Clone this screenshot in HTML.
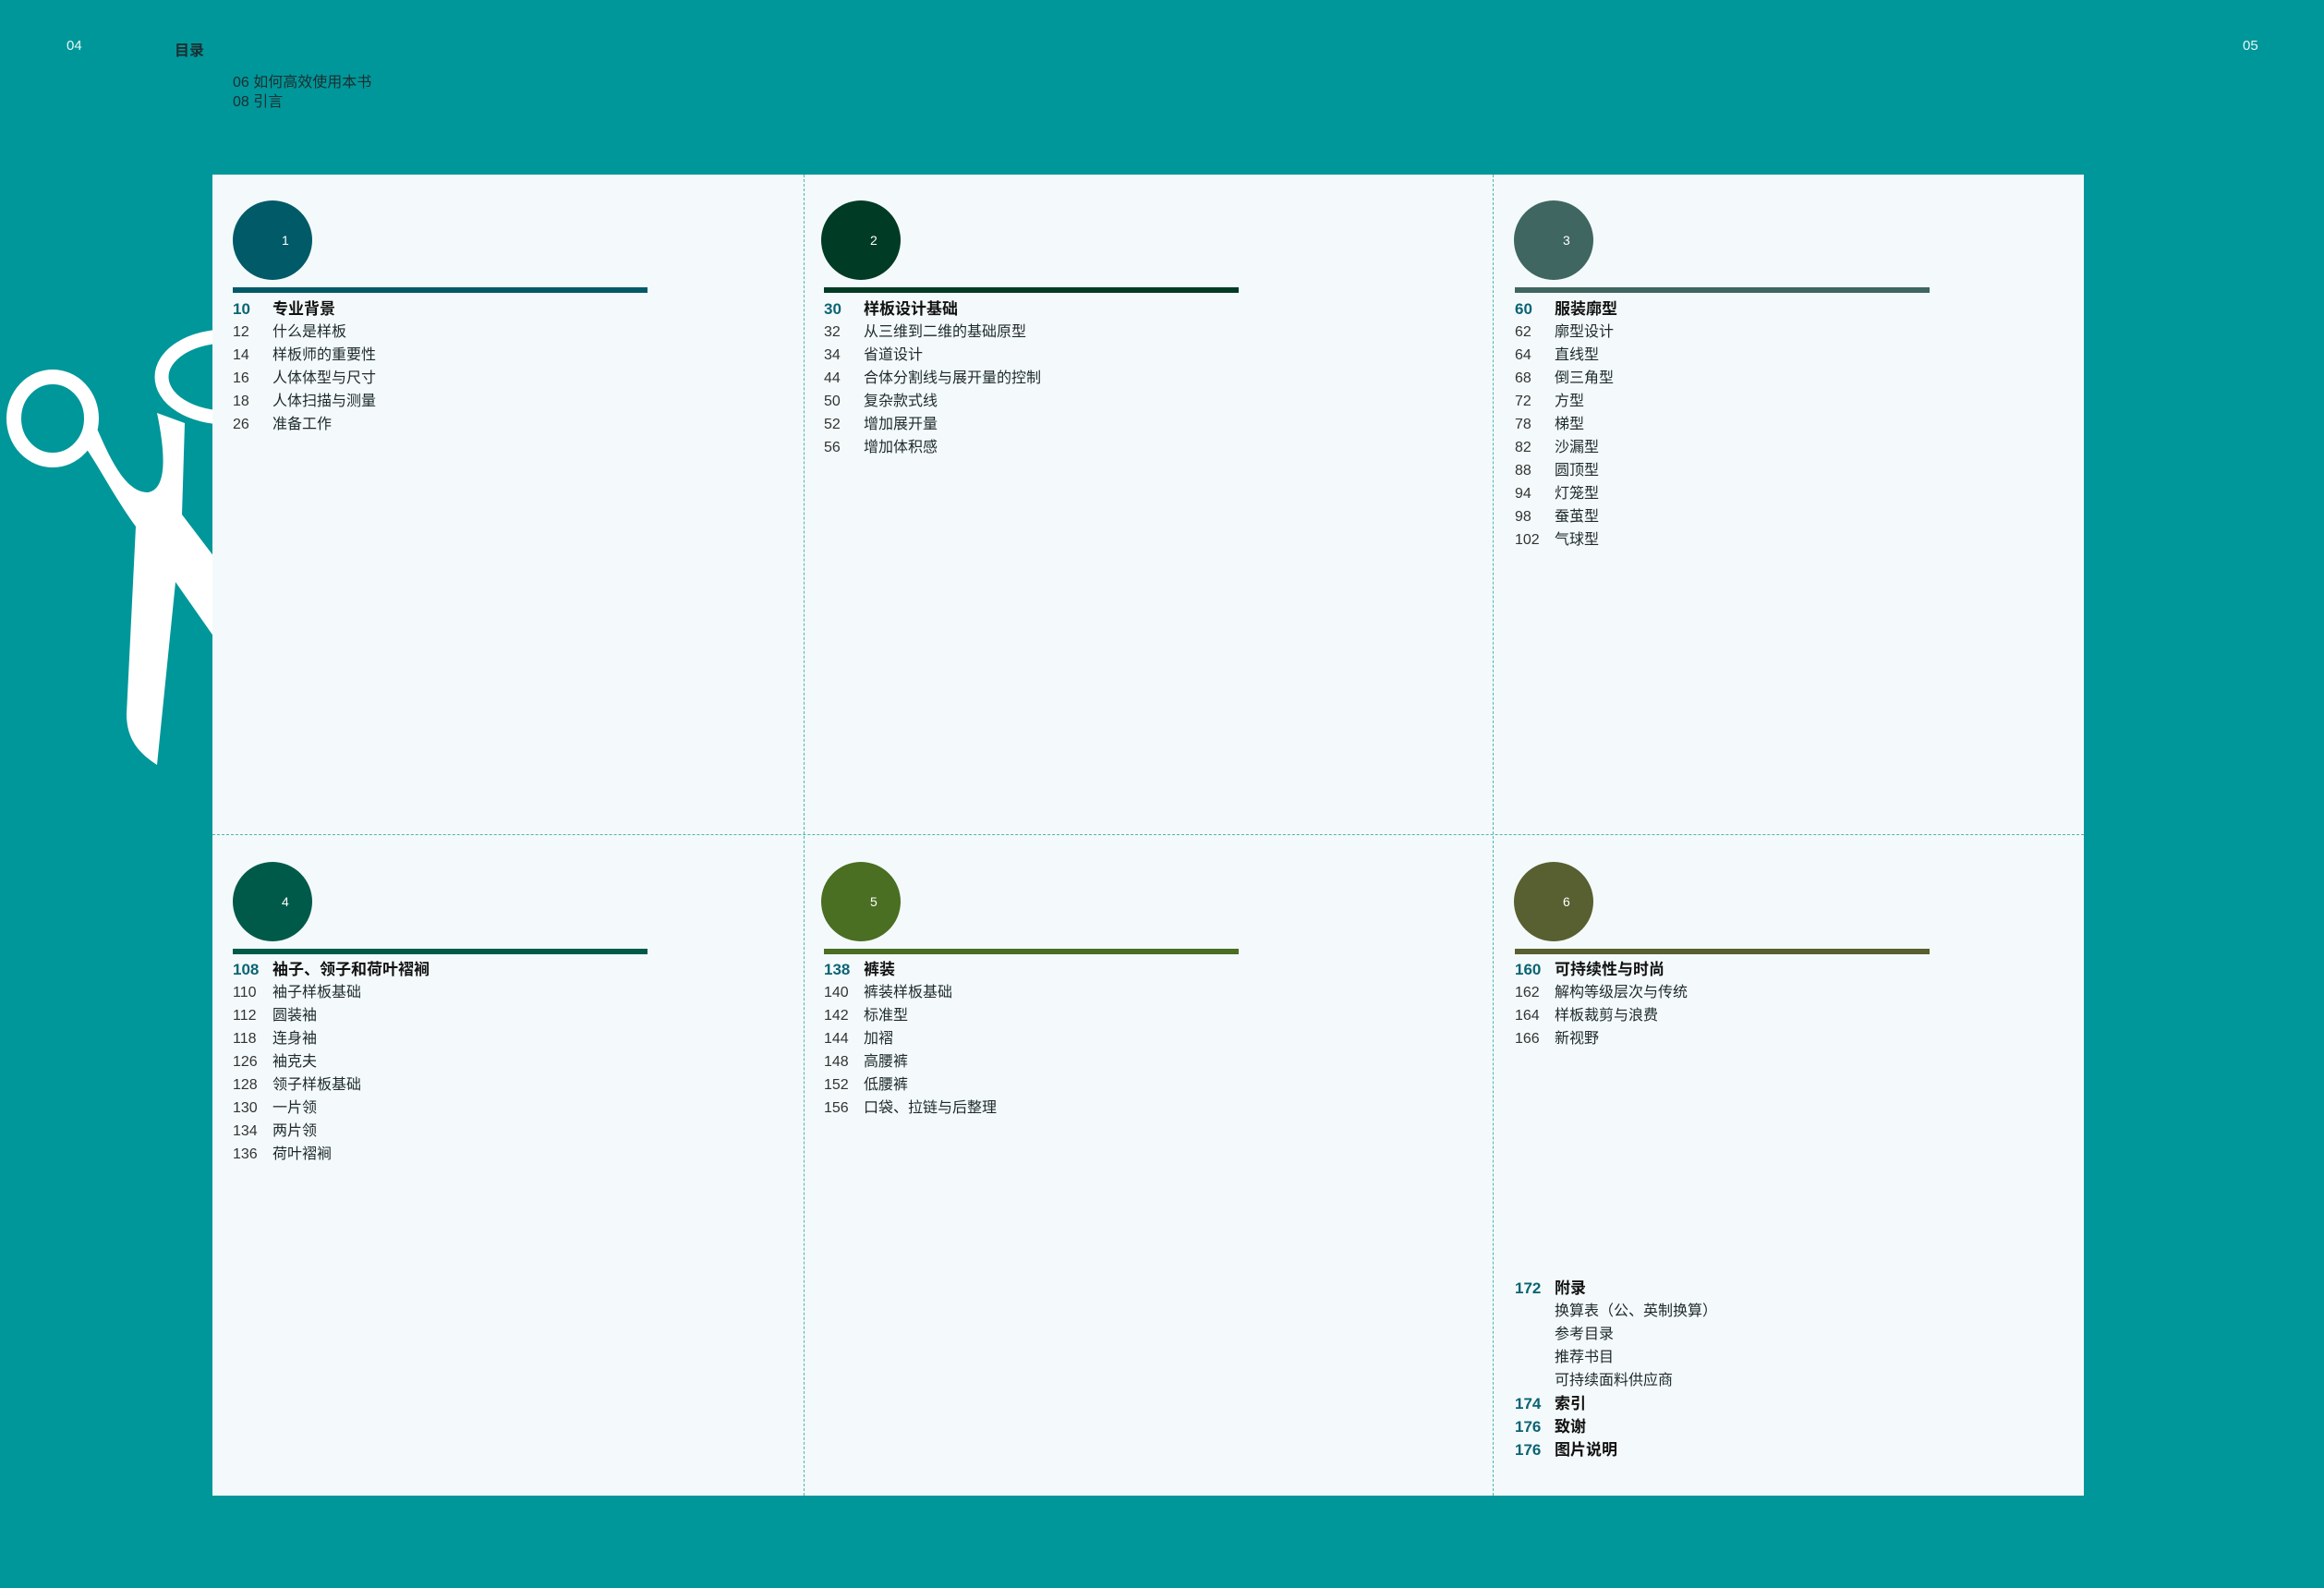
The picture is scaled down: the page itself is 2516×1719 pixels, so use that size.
<!DOCTYPE html>
<html><head><meta charset="utf-8"><style>
*{margin:0;padding:0;box-sizing:border-box}
body{width:2516px;height:1719px;background:#00979a;position:relative;overflow:hidden;font-family:"Liberation Sans","Noto Sans CJK SC",sans-serif;color:#1e2a2a}
.a{position:absolute;white-space:nowrap}
#panel{position:absolute;left:230px;top:189px;width:2026px;height:1430px;background:#f4fafb}
.vl{position:absolute;top:189px;height:1430px;width:0;border-left:1.5px dashed #4fb3b3}
.hl{position:absolute;left:230px;width:2026px;top:903px;height:0;border-top:1.5px dashed #4fb3b3}
.c{position:absolute;width:86px;height:86px;border-radius:50%}
.c span{position:absolute;left:53px;top:35px;color:#fff;font-size:14px}
.bar{position:absolute;width:449px;height:6px}
.list{position:absolute;font-size:16px;line-height:25px}
.r{display:flex}
.r b,.r i{font-style:normal;font-weight:normal;display:inline-block;width:43px;color:#333}
.h{font-weight:bold;color:#111;font-size:17px}
.h b{color:#0a6475;font-weight:bold}
</style></head><body>
<div class="a" style="left:72px;top:41px;font-size:15px;color:#e8f6f6">04</div>
<div class="a" style="left:189px;top:41px;font-size:16px;color:#1b2e30;font-weight:bold">目录</div>
<div class="a" style="left:252px;top:79px;font-size:16px;line-height:21px;color:#1b2e30">06 如何高效使用本书<br>08 引言</div>
<div class="a" style="left:2428px;top:41px;font-size:15px;color:#e8f6f6">05</div>

<svg class="a" style="left:0;top:0" width="240" height="900" viewBox="0 0 240 900">
<ellipse cx="57" cy="453" rx="42" ry="45" fill="none" stroke="#fff" stroke-width="16"/>
<ellipse cx="245" cy="408" rx="70" ry="44" fill="none" stroke="#fff" stroke-width="15"/>
<path fill="#fff" d="M100,452 C118,495 135,533 160,533 C180,530 180,495 170,447 L200,458 L197,557 L232,603 L232,690 L190,630 L170,828 C150,815 137,800 137,773 L147,570 C125,540 110,510 93,485 Z"/>
</svg>

<div id="panel"></div>
<div class="vl" style="left:870px"></div>
<div class="vl" style="left:1616px"></div>
<div class="hl"></div>

<div class="c" style="left:252px;top:217px;background:#015a68"><span>1</span></div>
<div class="c" style="left:889px;top:217px;background:#003b25"><span>2</span></div>
<div class="c" style="left:1639px;top:217px;background:#3f6660"><span>3</span></div>
<div class="c" style="left:252px;top:933px;background:#005a4a"><span>4</span></div>
<div class="c" style="left:889px;top:933px;background:#4a6e22"><span>5</span></div>
<div class="c" style="left:1639px;top:933px;background:#585f30"><span>6</span></div>

<div class="bar" style="left:252px;top:311px;background:#015a68"></div>
<div class="bar" style="left:892px;top:311px;background:#003b25"></div>
<div class="bar" style="left:1640px;top:311px;background:#3f6660"></div>
<div class="bar" style="left:252px;top:1027px;background:#005a4a"></div>
<div class="bar" style="left:892px;top:1027px;background:#4a6e22"></div>
<div class="bar" style="left:1640px;top:1027px;background:#585f30"></div>

<div class="list" style="left:252px;top:322px">
<div class="r h"><b>10</b>专业背景</div>
<div class="r"><i>12</i>什么是样板</div>
<div class="r"><i>14</i>样板师的重要性</div>
<div class="r"><i>16</i>人体体型与尺寸</div>
<div class="r"><i>18</i>人体扫描与测量</div>
<div class="r"><i>26</i>准备工作</div>
</div>
<div class="list" style="left:892px;top:322px">
<div class="r h"><b>30</b>样板设计基础</div>
<div class="r"><i>32</i>从三维到二维的基础原型</div>
<div class="r"><i>34</i>省道设计</div>
<div class="r"><i>44</i>合体分割线与展开量的控制</div>
<div class="r"><i>50</i>复杂款式线</div>
<div class="r"><i>52</i>增加展开量</div>
<div class="r"><i>56</i>增加体积感</div>
</div>
<div class="list" style="left:1640px;top:322px">
<div class="r h"><b>60</b>服装廓型</div>
<div class="r"><i>62</i>廓型设计</div>
<div class="r"><i>64</i>直线型</div>
<div class="r"><i>68</i>倒三角型</div>
<div class="r"><i>72</i>方型</div>
<div class="r"><i>78</i>梯型</div>
<div class="r"><i>82</i>沙漏型</div>
<div class="r"><i>88</i>圆顶型</div>
<div class="r"><i>94</i>灯笼型</div>
<div class="r"><i>98</i>蚕茧型</div>
<div class="r"><i>102</i>气球型</div>
</div>
<div class="list" style="left:252px;top:1037px">
<div class="r h"><b>108</b>袖子、领子和荷叶褶裥</div>
<div class="r"><i>110</i>袖子样板基础</div>
<div class="r"><i>112</i>圆装袖</div>
<div class="r"><i>118</i>连身袖</div>
<div class="r"><i>126</i>袖克夫</div>
<div class="r"><i>128</i>领子样板基础</div>
<div class="r"><i>130</i>一片领</div>
<div class="r"><i>134</i>两片领</div>
<div class="r"><i>136</i>荷叶褶裥</div>
</div>
<div class="list" style="left:892px;top:1037px">
<div class="r h"><b>138</b>裤装</div>
<div class="r"><i>140</i>裤装样板基础</div>
<div class="r"><i>142</i>标准型</div>
<div class="r"><i>144</i>加褶</div>
<div class="r"><i>148</i>高腰裤</div>
<div class="r"><i>152</i>低腰裤</div>
<div class="r"><i>156</i>口袋、拉链与后整理</div>
</div>
<div class="list" style="left:1640px;top:1037px">
<div class="r h"><b>160</b>可持续性与时尚</div>
<div class="r"><i>162</i>解构等级层次与传统</div>
<div class="r"><i>164</i>样板裁剪与浪费</div>
<div class="r"><i>166</i>新视野</div>
</div>
<div class="list" style="left:1640px;top:1382px">
<div class="r h"><b>172</b>附录</div>
<div class="r"><i></i>换算表（公、英制换算）</div>
<div class="r"><i></i>参考目录</div>
<div class="r"><i></i>推荐书目</div>
<div class="r"><i></i>可持续面料供应商</div>
<div class="r h"><b>174</b>索引</div>
<div class="r h"><b>176</b>致谢</div>
<div class="r h"><b>176</b>图片说明</div>
</div>
</body></html>
